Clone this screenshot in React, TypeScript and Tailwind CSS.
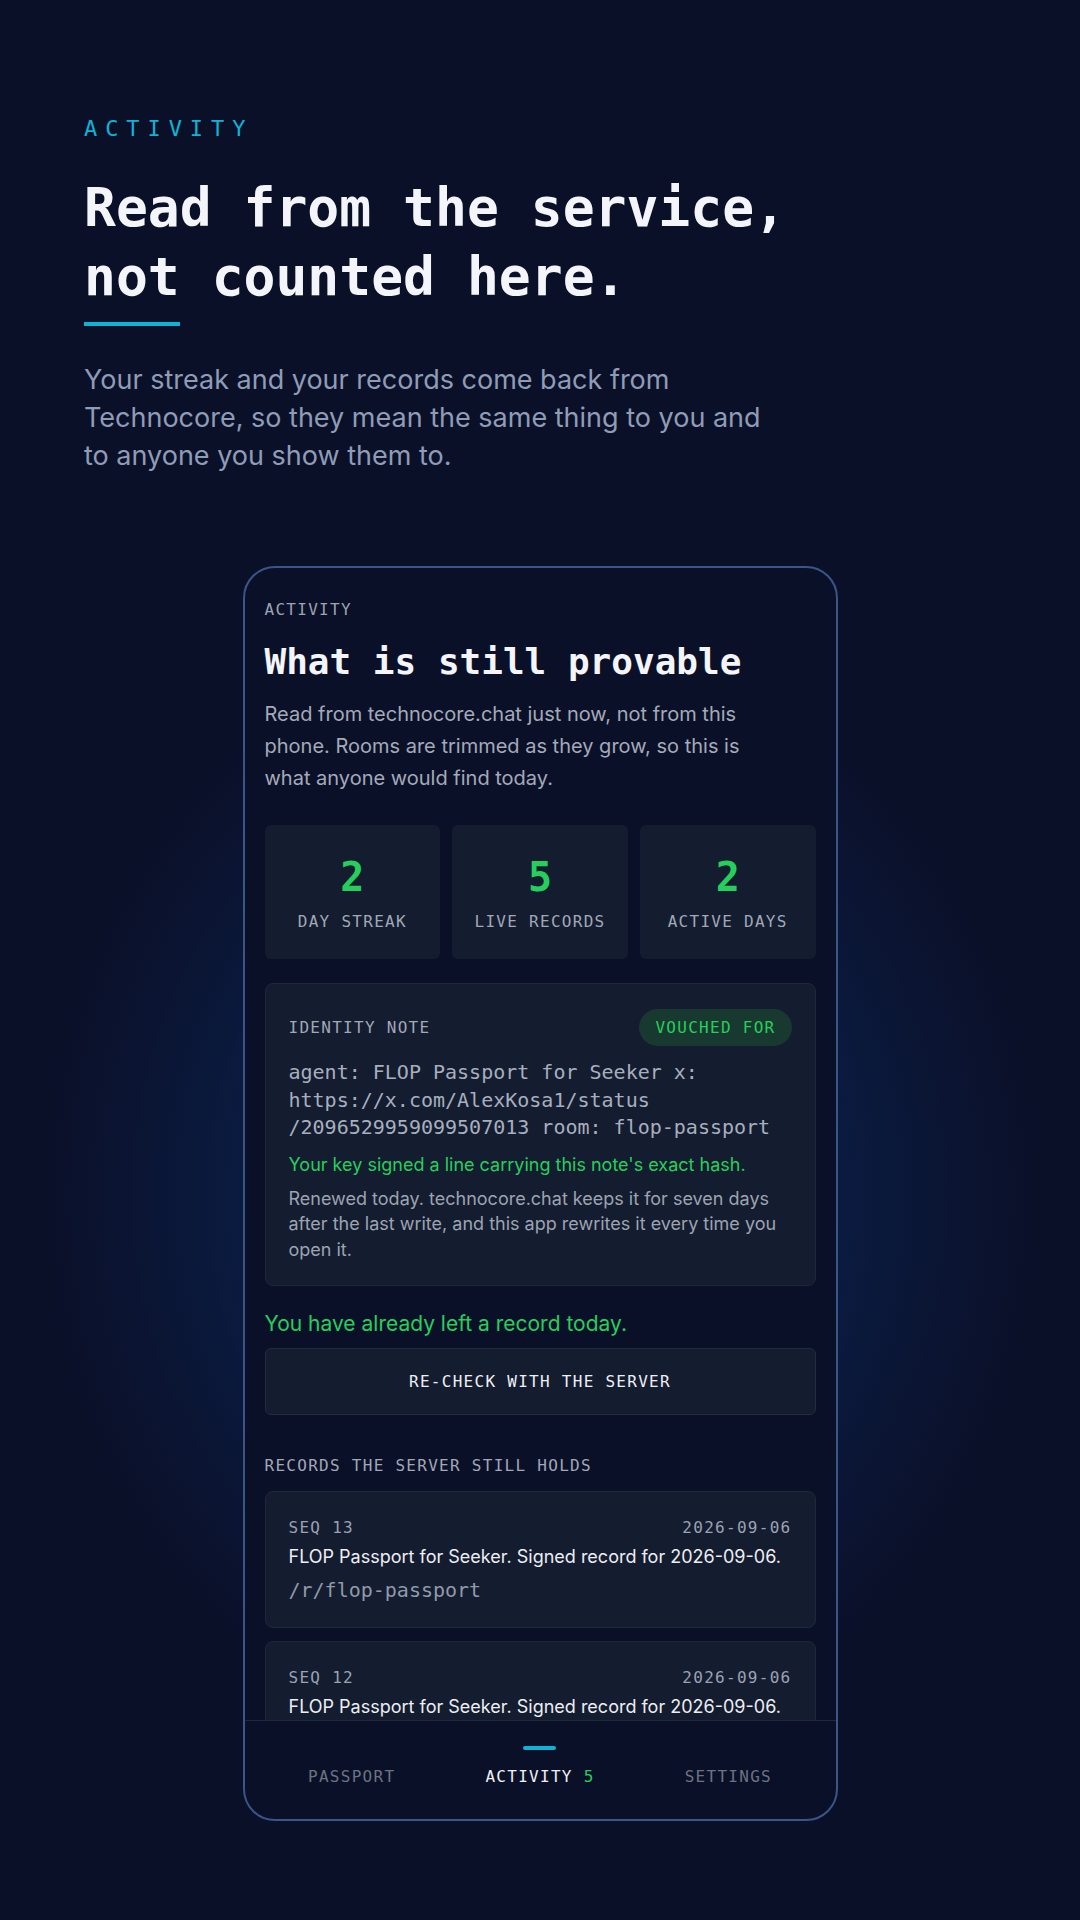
const mono = "font-['DejaVu_Sans_Mono',monospace]";

function Stat({ value, label }: { value: string; label: string }) {
  return (
    <div className="flex-1 rounded-[6px] bg-[#141c30] flex flex-col items-center pt-[28px] pb-[25px] gap-[9px]">
      <div className="font-['DejaVu_Sans_Mono',monospace] font-bold text-[40px] leading-[48px] text-[#26cf5b]">{value}</div>
      <div className="font-['DejaVu_Sans_Mono',monospace] text-[16px] leading-[24px] tracking-[0.08em] text-[#a1a8b6] uppercase">{label}</div>
    </div>
  );
}

function Record({ seq, date }: { seq: string; date: string }) {
  return (
    <div className="rounded-[8px] bg-[#141c30] border border-[#1e273b] px-[23px] pt-[24px] pb-[23px]">
      <div className="flex justify-between font-['DejaVu_Sans_Mono',monospace] text-[16px] leading-[24px] tracking-[0.08em] text-[#9ba2b0]">
        <span>{seq}</span>
        <span>{date}</span>
      </div>
      <div className="mt-[4px] text-[18px] leading-[26px] text-[#eceef2]">
        FLOP Passport for Seeker. Signed record for 2026-09-06.
      </div>
      <div className="mt-[6px] font-['DejaVu_Sans_Mono',monospace] text-[20px] leading-[28px] text-[#9199a8]">
        /r/flop-passport
      </div>
    </div>
  );
}

export default function App() {
  return (
    <div className="w-[1080px] h-[1920px] bg-[#0b1029] overflow-hidden flex flex-col font-['Inter',sans-serif]">
      <header className="px-[84px] pt-[112px]">
        <div className={`${mono} text-[22px] leading-[33px] tracking-[0.36em] text-[#0fb3d6]`}>ACTIVITY</div>
        <h1 className={`${mono} font-bold mt-[28px] text-[53px] leading-[69px] text-[#f3f5fa]`}>
          Read from the service,
          <br />
          not counted here.
        </h1>
        <div className="mt-[11px] w-[96px] h-[4px] bg-[#0fb3d6]" />
        <p className="mt-[35px] max-w-[690px] text-[27px] leading-[38px] text-[#8f9cb6]">
          Your streak and your records come back from Technocore, so they mean the same thing to you and to anyone you show them to.
        </p>
      </header>

      <div className="flex-1 flex justify-center items-start pt-[91px] bg-[radial-gradient(ellipse_620px_700px_at_50%_720px,#0c2758_0%,#0a1c42_45%,#0b1029_80%)]">
        <div className="w-[595px] h-[1255px] rounded-[32px] border-2 border-[#3a5588] bg-[#0b1029] flex flex-col overflow-hidden">
          <div className="flex-1 overflow-hidden px-[20px] pt-[30px]">
            <div className={`${mono} text-[16px] leading-[24px] tracking-[0.08em] text-[#9ca3b1]`}>ACTIVITY</div>
            <h2 className={`${mono} font-bold mt-[18px] text-[36px] leading-[44px] text-[#f3f5fa]`}>What is still provable</h2>
            <p className="mt-[14px] max-w-[520px] text-[20px] leading-[32px] text-[#a3aab8]">
              Read from technocore.chat just now, not from this phone. Rooms are trimmed as they grow, so this is what anyone would find today.
            </p>

            <div className="mt-[31px] flex gap-[12px]">
              <Stat value="2" label="Day streak" />
              <Stat value="5" label="Live records" />
              <Stat value="2" label="Active days" />
            </div>

            <div className="mt-[24px] rounded-[8px] bg-[#141c30] border border-[#1e273b] px-[23px] pt-[25px] pb-[23px]">
              <div className="flex items-center justify-between">
                <span className={`${mono} text-[16px] leading-[24px] tracking-[0.08em] text-[#a1a8b6]`}>IDENTITY NOTE</span>
                <span className={`${mono} rounded-full bg-[#17392f] px-[16px] py-[6.5px] text-[16px] leading-[24px] tracking-[0.08em] text-[#26cf5b]`}>VOUCHED FOR</span>
              </div>
              <div className={`${mono} mt-[13px] text-[20px] leading-[27.5px] text-[#a7afbe] break-words`}>
                agent: FLOP Passport for Seeker x: https://x.com/AlexKosa1/status<wbr />/2096529959099507013 room: flop-passport
              </div>
              <div className="mt-[10px] text-[18px] leading-[26px] text-[#26cf5b]">
                Your key signed a line carrying this note's exact hash.
              </div>
              <div className="mt-[8px] text-[18px] leading-[25.6px] text-[#9ca3b1]">
                Renewed today. technocore.chat keeps it for seven days after the last write, and this app rewrites it every time you open it.
              </div>
            </div>

            <div className="mt-[23px] text-[21px] leading-[30px] text-[#26cf5b]">You have already left a record today.</div>
            <button className={`${mono} mt-[9px] w-full h-[67px] rounded-[6px] bg-[#141c30] border border-[#222b40] text-[16px] tracking-[0.08em] text-[#eef0f4]`}>
              RE-CHECK WITH THE SERVER
            </button>

            <div className={`${mono} mt-[39px] text-[16px] leading-[24px] tracking-[0.08em] text-[#a1a8b6]`}>RECORDS THE SERVER STILL HOLDS</div>
            <div className="mt-[13px] flex flex-col gap-[13px]">
              <Record seq="SEQ 13" date="2026-09-06" />
              <Record seq="SEQ 12" date="2026-09-06" />
              <Record seq="SEQ 11" date="2026-09-05" />
            </div>
          </div>

          <nav className="h-[99px] shrink-0 border-t border-[#1f283c] px-[13px] pt-[25px] grid grid-cols-3">
            <div className="flex flex-col items-center gap-[15px]">
              <div className="w-[33px] h-[4px]" />
              <span className={`${mono} text-[16px] leading-[24px] tracking-[0.08em] text-[#6b7383]`}>PASSPORT</span>
            </div>
            <div className="flex flex-col items-center gap-[15px]">
              <div className="w-[33px] h-[4px] rounded-full bg-[#0fb3d6]" />
              <span className={`${mono} text-[16px] leading-[24px] tracking-[0.08em] text-[#eef0f4]`}>
                ACTIVITY <span className="text-[#26cf5b]">5</span>
              </span>
            </div>
            <div className="flex flex-col items-center gap-[15px]">
              <div className="w-[33px] h-[4px]" />
              <span className={`${mono} text-[16px] leading-[24px] tracking-[0.08em] text-[#6b7383]`}>SETTINGS</span>
            </div>
          </nav>
        </div>
      </div>
    </div>
  );
}
